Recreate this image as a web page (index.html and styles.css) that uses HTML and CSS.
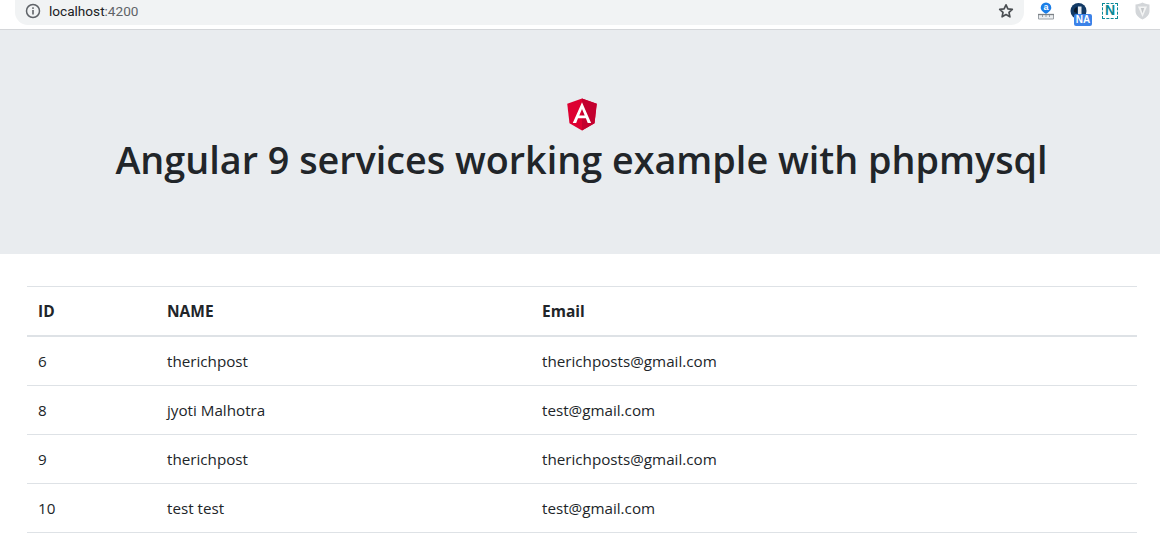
FILE: index.html
```html
<!DOCTYPE html>
<html lang="en">
<head>
<meta charset="utf-8">
<title>Angular 9 services</title>
<link rel="stylesheet" href="styles.css">
</head>
<body>
<div class="chrome">
  <div class="omnibox">
    <svg class="info" width="16" height="16" viewBox="0 0 16 16"><circle cx="8" cy="8" r="6.500" fill="none" stroke="#5f6368" stroke-width="1.500"/><rect x="7.200" y="7" width="1.600" height="4.500" fill="#5f6368"/><rect x="7.200" y="4.300" width="1.600" height="1.600" fill="#5f6368"/></svg>
    <span class="host">localhost</span><span class="port">:4200</span>
    <svg class="star" width="16" height="16" viewBox="0 0 16 16"><path d="M8 1.800l1.900 4.100 4.400.5-3.300 3 .9 4.400L8 11.600l-3.900 2.200.9-4.400-3.300-3 4.400-.5z" fill="none" stroke="#4a4e52" stroke-width="1.700" stroke-linejoin="round"/></svg>
  </div>
  <div class="exts">
    <svg class="ext-a" width="18" height="18" viewBox="0 0 18 18"><path d="M9 0.500a5.300 5.300 0 0 1 5.300 5.300c0 2.600-3 4.700-5.300 6.200-2.300-1.500-5.300-3.600-5.300-6.200A5.300 5.300 0 0 1 9 .5z" fill="#1a7ee8"/><text x="9" y="8.300" class="pin-a">a</text><path d="M1.500 12.500h15v4.500h-15z" fill="#eceef0" stroke="#9aa0a6" stroke-width="1"/><path d="M1 12.500h16" stroke="#7c8186" stroke-width="1.300"/><path d="M5.500 13v2M9 13v2M12.500 13v2" stroke="#9aa0a6" stroke-width="1"/></svg>
    <div class="ext-na">
      <svg width="18" height="16" viewBox="0 0 18 16"><circle cx="8.500" cy="8" r="8" fill="#123a66"/><path d="M4 9a4.500 4.500 0 0 1 3-5v6z" fill="#0b1a2b"/><path d="M8 3.500h3.500V11H8z" fill="#e3e8ee"/></svg>
      <span class="badge">NA</span>
    </div>
    <div class="ext-n">N</div>
    <svg class="ext-s" width="15" height="18" viewBox="0 0 15 18"><path d="M.5 2.500C3 2.200 5.500 1.500 7.500.5c2 1 4.500 1.700 7 2V9c0 4-3 6.800-7 8.500-4-1.700-7-4.500-7-8.500z" fill="#d3d6d9"/><path d="M3 4.500h9L7.500 15z" fill="#f3f4f4"/><path d="M5.800 6h3.400L7.500 11.500z" fill="#c4c7ca"/></svg>
  </div>
</div>
<header class="jumbotron">
  <svg class="logo" width="32" height="33" viewBox="0 0 32 34"><path d="M16 0.500L0.800 5.900l2.300 20.100L16 33.500l12.900-7.500 2.300-20.100z" fill="#dd0031"/><path d="M16 0.500v33l12.900-7.500 2.300-20.100z" fill="#c3002f"/><path d="M16 4.300L6.500 25.700h3.500l1.900-4.800h8.100l1.900 4.800h3.500zm2.800 13.700h-5.600L16 11.300z" fill="#fff"/></svg>
  <h1 class="title">Angular 9 services working example with phpmysql</h1>
</header>
<main class="content">
  <table class="data">
    <thead>
      <tr><th class="c-id">ID</th><th class="c-name">NAME</th><th>Email</th></tr>
    </thead>
    <tbody>
      <tr><td>6</td><td>therichpost</td><td>therichposts@gmail.com</td></tr>
      <tr><td>8</td><td>jyoti Malhotra</td><td>test@gmail.com</td></tr>
      <tr><td>9</td><td>therichpost</td><td>therichposts@gmail.com</td></tr>
      <tr><td>10</td><td>test test</td><td>test@gmail.com</td></tr>
    </tbody>
  </table>
</main>
</body>
</html>
```
FILE: styles.css
```css
* { box-sizing: border-box; }
html, body { margin: 0; padding: 0; }
body {
  width: 1160px;
  height: 548px;
  overflow: hidden;
  background: #fff;
  color: #212529;
  font-family: "Open Sans", "Noto Sans", sans-serif;
}
.chrome {
  height: 30px;
  display: flex;
  align-items: flex-start;
  background: #fff;
  border-bottom: 1px solid #d4d6d9;
}
.omnibox {
  margin-left: 15px;
  width: 1009px;
  height: 25px;
  background: #f1f3f4;
  border-radius: 0 0 13px 13px;
  display: flex;
  align-items: center;
  padding: 0 10px 3px 10px;
  font-family: "Roboto", sans-serif;
  font-size: 13.6px;
}
.info { margin-right: 8px; }
.host { color: #202124; }
.port { color: #5f6368; }
.star { margin-left: auto; }
.exts {
  display: flex;
  align-items: flex-start;
  margin-left: 13px;
  padding-top: 2px;
}
.ext-a { margin-right: 15px; }
.pin-a {
  font: bold 9px "Liberation Sans", sans-serif;
  fill: #fff;
  text-anchor: middle;
}
.ext-na { position: relative; width: 24px; height: 24px; margin-right: 8px; }
.badge {
  position: absolute;
  left: 4px;
  top: 12px;
  width: 18px;
  height: 12px;
  background: #3b82e8;
  color: #fff;
  border-radius: 2px;
  font: bold 10px/12px "Liberation Sans", sans-serif;
  text-align: center;
}
.ext-n {
  width: 16px;
  height: 16px;
  margin: 1px 17px 0 0;
  border: 1.500px dashed #0b8a96;
  color: #0b8a96;
  font: bold 14px/13px "Liberation Sans", sans-serif;
  text-align: center;
}
.jumbotron {
  height: 224px;
  background: #e9ecef;
  display: flex;
  flex-direction: column;
  align-items: center;
  padding-top: 68px;
}
.logo { display: block; margin-left: 3px; }
.title {
  margin: 5px 0 0 3px;
  font-size: 37.750px;
  line-height: 48px;
  font-weight: 600;
  white-space: nowrap;
}
.content { padding: 32px 23px 0 27px; }
.data {
  width: 100%;
  border-collapse: collapse;
  font-size: 15.2px;
  table-layout: fixed;
}
.data th, .data td {
  text-align: left;
  padding: 0 11px;
  vertical-align: middle;
  height: 49px;
  border-top: 1px solid #dee2e6;
}
.data th { font-size: 15.500px; font-weight: 700; border-bottom: 2px solid #dee2e6; }
.data tbody tr:first-child td { height: 50px; }
.data tbody tr:last-child td { border-bottom: 1px solid #dee2e6; }
.c-id { width: 129px; }
.c-name { width: 375px; }
```
